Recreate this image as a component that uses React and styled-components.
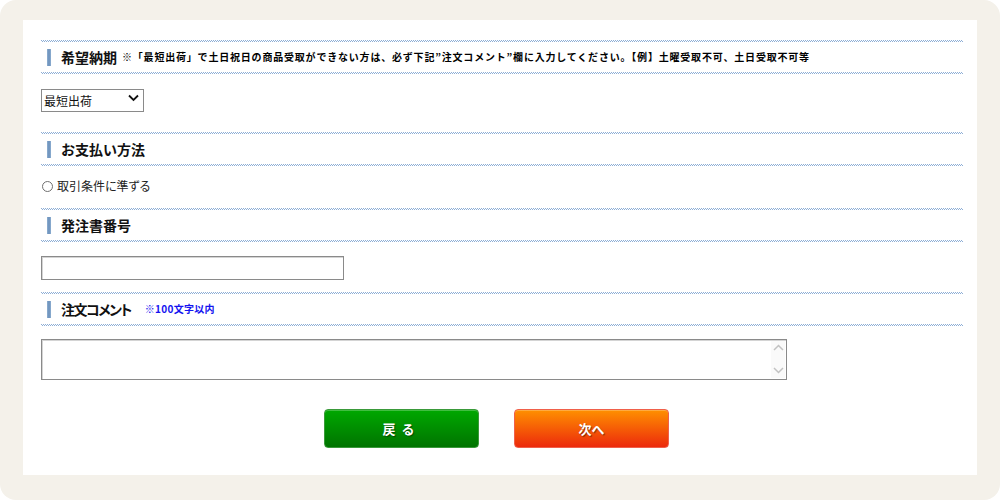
import React from "react";
import styled, { createGlobalStyle } from "styled-components";

const Global = createGlobalStyle`
  html, body { margin: 0; padding: 0; background: #ffffff; }
  body { font-family: "Noto Sans CJK JP", "Noto Sans", sans-serif; color: #111; }
  * { box-sizing: border-box; }
`;

const Frame = styled.div`
  width: 1000px;
  height: 500px;
  background: #f4f1ea;
  border-radius: 16px;
  padding: 20px 23px 25px 23px;
`;

const Card = styled.div`
  background: #ffffff;
  height: 455px;
  padding: 20px 14px 0 18px;
  display: flex;
  flex-direction: column;
`;

const Dotted = styled.div`
  height: 2px;
  width: 100%;
  background-image:
    linear-gradient(90deg, #8daed6 50%, transparent 50%),
    linear-gradient(90deg, transparent 50%, #8daed6 50%);
  background-size: 2px 1px, 2px 1px;
  background-position: 0 0, 0 1px;
  background-repeat: repeat-x;
`;

const HeadRow = styled.div`
  height: 30px;
  display: flex;
  align-items: center;
  padding-left: 6px;
  gap: 10px;
`;

const Bar = styled.span`
  width: 4px;
  height: 17px;
  background: linear-gradient(90deg, #8fb0d2, #6a8fba 50%, #8fb0d2);
  flex: none;
`;

const Title = styled.h2`
  margin: 0;
  font-size: 14px;
  font-weight: 700;
  line-height: 18px;
  color: #111;
  letter-spacing: ${(p) => p.$ls || 0}px;
  font-feature-settings: ${(p) => (p.$palt ? '"palt"' : "normal")};
  white-space: nowrap;
`;

const Note = styled.span`
  font-size: 10px;
  font-weight: 700;
  line-height: 14px;
  letter-spacing: ${(p) => (p.$ls != null ? p.$ls : 0.8)}px;
  color: ${(p) => p.$color || "#000"};
  white-space: nowrap;
  margin-left: ${(p) => p.$ml || 0}px;
  font-feature-settings: ${(p) => (p.$palt ? '"palt"' : "normal")};
`;

const Body = styled.div`
  padding-top: ${(p) => p.$top}px;
  padding-bottom: ${(p) => p.$bottom}px;
`;

const SelectWrap = styled.div`
  position: relative;
  width: 103px;
  height: 23px;
`;

const Select = styled.select`
  appearance: none;
  width: 103px;
  height: 23px;
  border: 1px solid #8a8a8a;
  border-radius: 0;
  background: #fff;
  font-family: "Noto Sans CJK JP", sans-serif;
  font-size: 12px;
  color: #111;
  padding: 0 0 0 2px;
  margin: 0;
  outline: none;
`;

const SelectIcon = styled.svg`
  position: absolute;
  right: 5px;
  top: 7px;
  pointer-events: none;
`;

const RadioRow = styled.label`
  display: flex;
  align-items: center;
  height: 18px;
  gap: 4px;
  padding-left: 1px;
  font-size: 12px;
  line-height: 18px;
  color: #222;
  font-feature-settings: "palt";
`;

const Radio = styled.input`
  appearance: none;
  width: 11px;
  height: 11px;
  margin: 0;
  border: 1px solid #6f6f6f;
  border-radius: 50%;
  background: #fff;
  flex: none;
`;

const TextInput = styled.input`
  display: block;
  width: 303px;
  height: 24px;
  margin: 0;
  border: 1px solid #8a8a8a;
  box-shadow: inset 1px 1px 0 #d4d4d4;
  border-radius: 0;
  outline: none;
`;

const AreaWrap = styled.div`
  position: relative;
  width: 746px;
  height: 41px;
`;

const TextArea = styled.textarea`
  display: block;
  width: 746px;
  height: 41px;
  margin: 0;
  border: 1px solid #8a8a8a;
  box-shadow: inset 1px 1px 0 #d4d4d4;
  border-radius: 0;
  resize: none;
  outline: none;
  overflow: hidden;
`;

const ScrollArrows = styled.div`
  position: absolute;
  right: 2px;
  top: 2px;
  bottom: 2px;
  width: 14px;
  background: #fafafa;
  display: flex;
  flex-direction: column;
  justify-content: space-between;
  align-items: center;
  padding: 3px 0 4px;
`;

const Buttons = styled.div`
  display: flex;
  justify-content: center;
  gap: 35px;
  padding-top: 29px;
  padding-right: 11px;
`;

const Button = styled.button`
  width: 155px;
  height: 39px;
  border-radius: 4px;
  border: 1px solid ${(p) => p.$border};
  background: linear-gradient(180deg, ${(p) => p.$top}, ${(p) => p.$bottom});
  color: #fff;
  font-family: "Noto Sans CJK JP", sans-serif;
  font-size: 13px;
  font-weight: 700;
  letter-spacing: ${(p) => p.$ls || 0}px;
  text-shadow: 1px 1px 1px rgba(0, 0, 0, 0.45);
  box-shadow: inset 0 1px 0 rgba(255, 255, 255, 0.25);
  cursor: pointer;
  padding: 0;
`;

function Heading({ children }) {
  return (
    <>
      <Dotted />
      <HeadRow>
        <Bar />
        {children}
      </HeadRow>
      <Dotted />
    </>
  );
}

export default function App() {
  return (
    <>
      <Global />
      <Frame>
        <Card>
          <Heading>
            <Title>希望納期</Title>
            <Note $ml={-5}>
              ※「最短出荷」で土日祝日の商品受取ができない方は、必ず下記”注文コメント”欄に入力してください。【例】土曜受取不可、土日受取不可等
            </Note>
          </Heading>
          <Body $top={13} $bottom={22}>
            <SelectWrap>
              <Select defaultValue="最短出荷">
                <option>最短出荷</option>
              </Select>
              <SelectIcon width="11" height="8" viewBox="0 0 11 8">
                <path d="M1 1.5 L5.5 6 L10 1.5" fill="none" stroke="#111" strokeWidth="1.8" />
              </SelectIcon>
            </SelectWrap>
          </Body>

          <Heading>
            <Title>お支払い方法</Title>
          </Heading>
          <Body $top={11} $bottom={13}>
            <RadioRow>
              <Radio type="radio" name="pay" />
              取引条件に準ずる
            </RadioRow>
          </Body>

          <Heading>
            <Title>発注書番号</Title>
          </Heading>
          <Body $top={14} $bottom={12}>
            <TextInput type="text" />
          </Body>

          <Heading>
            <Title $palt $ls={-1.5}>注文コメント</Title>
            <Note $color="#1414f0" $ml={4} $ls={0.3} $palt>※100文字以内</Note>
          </Heading>
          <Body $top={13} $bottom={0}>
            <AreaWrap>
              <TextArea />
              <ScrollArrows>
                <svg width="11" height="7" viewBox="0 0 11 7">
                  <path d="M1 6 L5.5 1.5 L10 6" fill="none" stroke="#c2c2c2" strokeWidth="1.5" />
                </svg>
                <svg width="11" height="7" viewBox="0 0 11 7">
                  <path d="M1 1 L5.5 5.5 L10 1" fill="none" stroke="#c2c2c2" strokeWidth="1.5" />
                </svg>
              </ScrollArrows>
            </AreaWrap>
          </Body>

          <Buttons>
            <Button $top="#00a800" $bottom="#007400" $border="#3a9a3a" $ls={6}>
              戻る
            </Button>
            <Button $top="#ff9000" $bottom="#ec2a0c" $border="#f0604a">
              次へ
            </Button>
          </Buttons>
        </Card>
      </Frame>
    </>
  );
}
